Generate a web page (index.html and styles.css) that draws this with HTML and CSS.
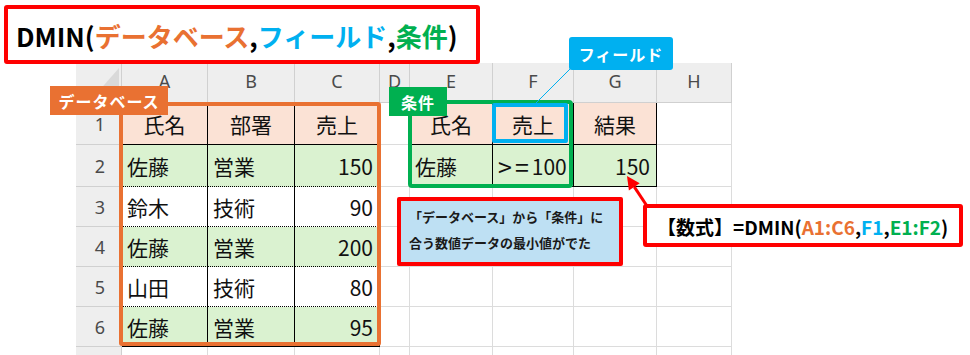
FILE: index.html
```html
<!DOCTYPE html>
<html lang="ja">
<head>
<meta charset="utf-8">
<title>DMIN関数</title>
<link rel="stylesheet" href="styles.css">
</head>
<body>
<div class="page">
  <div class="title">
    <span>DMIN(</span><span class="or">データベース</span><span>,</span><span class="bl">フィールド</span><span>,</span><span class="gn">条件</span><span>)</span>
  </div>

  <div class="sheet">
    <!-- column headers -->
    <div class="c hd corner"><span class="tri"></span></div>
    <div class="c hd">A</div>
    <div class="c hd">B</div>
    <div class="c hd">C</div>
    <div class="c hd">D</div>
    <div class="c hd">E</div>
    <div class="c hd">F</div>
    <div class="c hd">G</div>
    <div class="c hd">H</div>

    <!-- row 1 -->
    <div class="c rh">1</div>
    <div class="c t tb pk mid">氏名</div>
    <div class="c t tb pk mid">部署</div>
    <div class="c t tb pk mid">売上</div>
    <div class="c t"></div>
    <div class="c t tb pk mid">氏名</div>
    <div class="c t tb pk mid">売上</div>
    <div class="c t tb pk mid">結果</div>
    <div class="c"></div>

    <!-- row 2 -->
    <div class="c rh">2</div>
    <div class="c t td gr">佐藤</div>
    <div class="c t td gr">営業</div>
    <div class="c t td gr num">150</div>
    <div class="c t"></div>
    <div class="c t tb gr">佐藤</div>
    <div class="c t tb gr"><span class="op">&gt;=</span>100</div>
    <div class="c t tb gr num">150</div>
    <div class="c"></div>

    <!-- row 3 -->
    <div class="c rh">3</div>
    <div class="c t td">鈴木</div>
    <div class="c t td">技術</div>
    <div class="c t td num">90</div>
    <div class="c"></div>
    <div class="c"></div>
    <div class="c"></div>
    <div class="c"></div>
    <div class="c"></div>

    <!-- row 4 -->
    <div class="c rh">4</div>
    <div class="c t td gr">佐藤</div>
    <div class="c t td gr">営業</div>
    <div class="c t td gr num">200</div>
    <div class="c"></div>
    <div class="c"></div>
    <div class="c"></div>
    <div class="c"></div>
    <div class="c"></div>

    <!-- row 5 -->
    <div class="c rh">5</div>
    <div class="c t td">山田</div>
    <div class="c t td">技術</div>
    <div class="c t td num">80</div>
    <div class="c"></div>
    <div class="c"></div>
    <div class="c"></div>
    <div class="c"></div>
    <div class="c"></div>

    <!-- row 6 -->
    <div class="c rh">6</div>
    <div class="c t tb gr">佐藤</div>
    <div class="c t tb gr">営業</div>
    <div class="c t tb gr num">95</div>
    <div class="c"></div>
    <div class="c"></div>
    <div class="c"></div>
    <div class="c"></div>
    <div class="c"></div>

    <!-- row 7 (only its top edge is in view) -->
    <div class="c rh"></div>
    <div class="c"></div>
    <div class="c"></div>
    <div class="c"></div>
    <div class="c"></div>
    <div class="c"></div>
    <div class="c"></div>
    <div class="c"></div>
    <div class="c"></div>
  </div>

  <!-- range highlights -->
  <div class="frame frame-db"></div>
  <div class="frame frame-cond"></div>
  <div class="frame frame-field"></div>

  <div class="tag tag-db">データベース</div>
  <div class="tag tag-cond">条件</div>
  <div class="tag tag-field">フィールド</div>

  <svg class="leader" width="45" height="42" viewBox="0 0 45 42">
    <line x1="40" y1="3" x2="5" y2="38" stroke="#00b0f0" stroke-width="1"/>
  </svg>

  <div class="note">「データベース」から「条件」に<br>合う数値データの最小値がでた</div>

  <svg class="arrow" width="45" height="45" viewBox="0 0 45 45">
    <line x1="34" y1="44" x2="19.3" y2="21.8" stroke="#ff0000" stroke-width="3"/>
    <polygon points="12,11 24.7,18.2 13.9,25.4" fill="#ff0000"/>
  </svg>

  <div class="formula">【数式】=DMIN(<span class="or">A1:C6</span>,<span class="bl">F1</span>,<span class="gn">E1:F2</span>)</div>
</div>
</body>
</html>
```

FILE: styles.css
```css
html, body {
  margin: 0;
  padding: 0;
  background: #fff;
}

.page {
  position: relative;
  width: 970px;
  height: 355px;
  overflow: hidden;
  background: #fff;
  font-family: "Noto Sans CJK JP", "Noto Sans", sans-serif;
}

/* heading with the function signature */
.title {
  position: relative;
  z-index: 3;
  box-sizing: border-box;
  margin: 5px 0 0 4px;
  width: 476px;
  height: 59px;
  padding: 3px 0 0 8px;
  border: 4px solid #ff0000;
  border-radius: 3px;
  background: #fff;
  display: flex;
  align-items: center;
  font-size: 26px;
  font-weight: 700;
  line-height: 1;
  color: #000;
}

.or { color: #e97132; }
.bl { color: #00b0f0; }
.gn { color: #00b050; }

/* worksheet grid */
.sheet {
  margin: -1px 0 0 76px;
  display: grid;
  grid-template-columns: 46px 86px 87px 85px 30px 83px 81px 83px 75px;
  grid-template-rows: 40px 42px 42px 40px 40px 40px 40px 20px;
  width: 656px;
}

.c {
  box-sizing: border-box;
  display: flex;
  align-items: center;
  padding: 2px 5px 0 5px;
  border-right: 1px solid #dcdcdc;
  border-bottom: 1px solid #dcdcdc;
  font-size: 21px;
  line-height: 1;
  color: #111;
  white-space: nowrap;
  overflow: hidden;
}

.hd,
.rh {
  justify-content: center;
  padding: 0;
  background: #eeeeee;
  border-right: 1px solid #d0d0d0;
  border-bottom: 1px solid #d0d0d0;
  font-family: "Noto Sans", "Liberation Sans", sans-serif;
  font-size: 18px;
  color: #4a4a4a;
}

.hd { padding-bottom: 4px; }
.rh { padding-left: 3px; }

.corner { position: relative; }

.tri {
  position: absolute;
  left: 0;
  top: 0;
  width: 45px;
  height: 39px;
  background: #d9d9d9;
  clip-path: polygon(43px 5px, 43px 38px, 14px 38px);
}

/* table borders and fills */
.t  { border-right: 1px solid #000; }
.tb { border-bottom: 1px solid #000; }
.td { border-bottom: 1px dotted #000; }
.pk { background: #fbe2d5; }
.gr { background: #daf2d0; }
.mid { justify-content: center; }
.num { justify-content: flex-end; padding-right: 6px; }
.op { font-size: 25px; letter-spacing: 3px; }

/* coloured range frames */
.frame {
  position: absolute;
  box-sizing: border-box;
  z-index: 4;
}

.frame-db {
  left: 119px;
  top: 102px;
  width: 262px;
  height: 244px;
  border: 4px solid #e97132;
  border-radius: 3px;
}

.frame-cond {
  left: 408px;
  top: 100px;
  width: 165px;
  height: 88px;
  border: 4px solid #00b050;
  border-radius: 4px;
}

.frame-field {
  left: 492px;
  top: 103px;
  width: 76px;
  height: 40px;
  border: 4px solid #00b0f0;
  border-radius: 2px;
}

/* range labels */
.tag {
  position: absolute;
  z-index: 5;
  box-sizing: border-box;
  display: flex;
  align-items: center;
  justify-content: center;
  color: #fff;
  font-weight: 700;
  font-size: 16px;
  line-height: 1;
  letter-spacing: 1px;
}

.tag-db {
  left: 50px;
  top: 86px;
  width: 118px;
  height: 29px;
  background: #e97132;
}

.tag-cond {
  left: 389px;
  top: 87px;
  width: 58px;
  height: 29px;
  background: #00b050;
}

.tag-field {
  left: 569px;
  top: 37px;
  width: 104px;
  height: 33px;
  background: #00b0f0;
  border-radius: 3px;
}

.leader {
  position: absolute;
  z-index: 5;
  left: 530px;
  top: 66px;
}

/* explanation callout */
.note {
  position: absolute;
  z-index: 5;
  box-sizing: border-box;
  left: 397px;
  top: 197px;
  width: 226px;
  height: 69px;
  padding: 3px 0 0 8px;
  border: 4px solid #ff0000;
  border-radius: 2px;
  background: #bee0f3;
  font-size: 13px;
  font-weight: 700;
  line-height: 26px;
  color: #1a1a1a;
  white-space: nowrap;
}

.arrow {
  position: absolute;
  z-index: 5;
  left: 615px;
  top: 165px;
}

/* formula callout */
.formula {
  position: absolute;
  z-index: 6;
  box-sizing: border-box;
  left: 643px;
  top: 204px;
  width: 320px;
  height: 43px;
  padding: 2px 0 0 10px;
  border: 4px solid #ff0000;
  border-radius: 3px;
  background: #fff;
  display: flex;
  align-items: center;
  font-size: 19px;
  font-weight: 700;
  line-height: 1;
  color: #000;
  white-space: nowrap;
}
```
